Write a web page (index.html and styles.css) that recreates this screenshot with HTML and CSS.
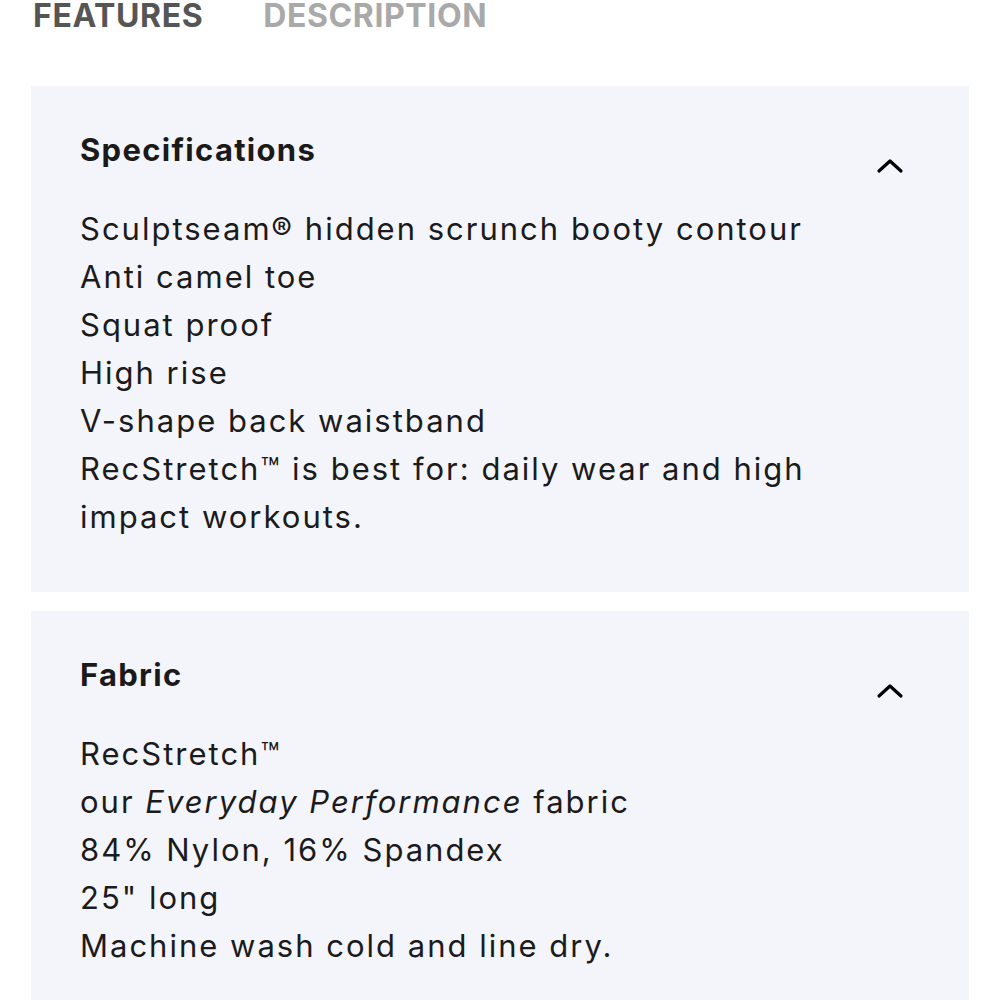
FILE: index.html
```html
<!DOCTYPE html>
<html lang="en">
<head>
    <meta charset="UTF-8">
    <meta name="viewport" content="width=device-width, initial-scale=1.0">
    <title>Product details</title>
    <link rel="stylesheet" href="styles.css">
</head>
<body>
    <div class="container">
        <div class="tabs">
            <span class="tab active">FEATURES</span>
            <span class="tab">DESCRIPTION</span>
        </div>

        <div class="panel">
            <div class="panelHead">
                <h2>Specifications</h2>
                <svg class="chevron" width="28" height="16" viewBox="0 0 28 16">
                    <polyline points="3,13 14,3 25,13" fill="none" stroke="#000" stroke-width="3.2" stroke-linecap="round" stroke-linejoin="round"/>
                </svg>
            </div>
            <ul class="panelBody">
                <li>Sculptseam&reg; hidden scrunch booty contour</li>
                <li>Anti camel toe</li>
                <li>Squat proof</li>
                <li>High rise</li>
                <li>V-shape back waistband</li>
                <li>RecStretch&trade; is best for: daily wear and high impact workouts.</li>
            </ul>
        </div>

        <div class="panel">
            <div class="panelHead">
                <h2>Fabric</h2>
                <svg class="chevron" width="28" height="16" viewBox="0 0 28 16">
                    <polyline points="3,13 14,3 25,13" fill="none" stroke="#000" stroke-width="3.2" stroke-linecap="round" stroke-linejoin="round"/>
                </svg>
            </div>
            <ul class="panelBody">
                <li>RecStretch&trade;</li>
                <li>our <em>Everyday Performance</em> fabric</li>
                <li>84% Nylon, 16% Spandex</li>
                <li>25" long</li>
                <li>Machine wash cold and line dry.</li>
            </ul>
        </div>
    </div>
</body>
</html>
```

FILE: styles.css
```css
body {
    margin: 0;
    background: #fff;
    font-family: "Inter", "Noto Sans", sans-serif;
    color: #1b1b1b;
}
.container {
    padding: 0 31px;
    overflow: hidden;
    height: 1000px;
}
.tabs {
    display: flex;
    gap: 60px;
    margin-top: -4px;
    height: 90px;
    padding-left: 2px;
}
.tab {
    font-size: 32px;
    font-weight: 700;
    line-height: 40px;
    color: #a9a9a9;
    letter-spacing: 0.6px;
}
.tab.active {
    color: #555;
}
.panel {
    background: #f4f5fb;
    padding: 40px 65px 51px 49px;
    margin-bottom: 19px;
}
.panelHead {
    display: flex;
    justify-content: space-between;
}
.panelHead h2 {
    margin: 0;
    font-size: 31px;
    font-weight: 700;
    line-height: 48px;
    letter-spacing: 1.3px;
    color: #1a1a1a;
}
.chevron {
    margin-top: 32px;
}
.panelBody {
    list-style: none;
    margin: 31px 0 0;
    padding: 0;
    font-size: 31px;
    line-height: 48px;
    letter-spacing: 2px;
    max-width: 740px;
}
```
